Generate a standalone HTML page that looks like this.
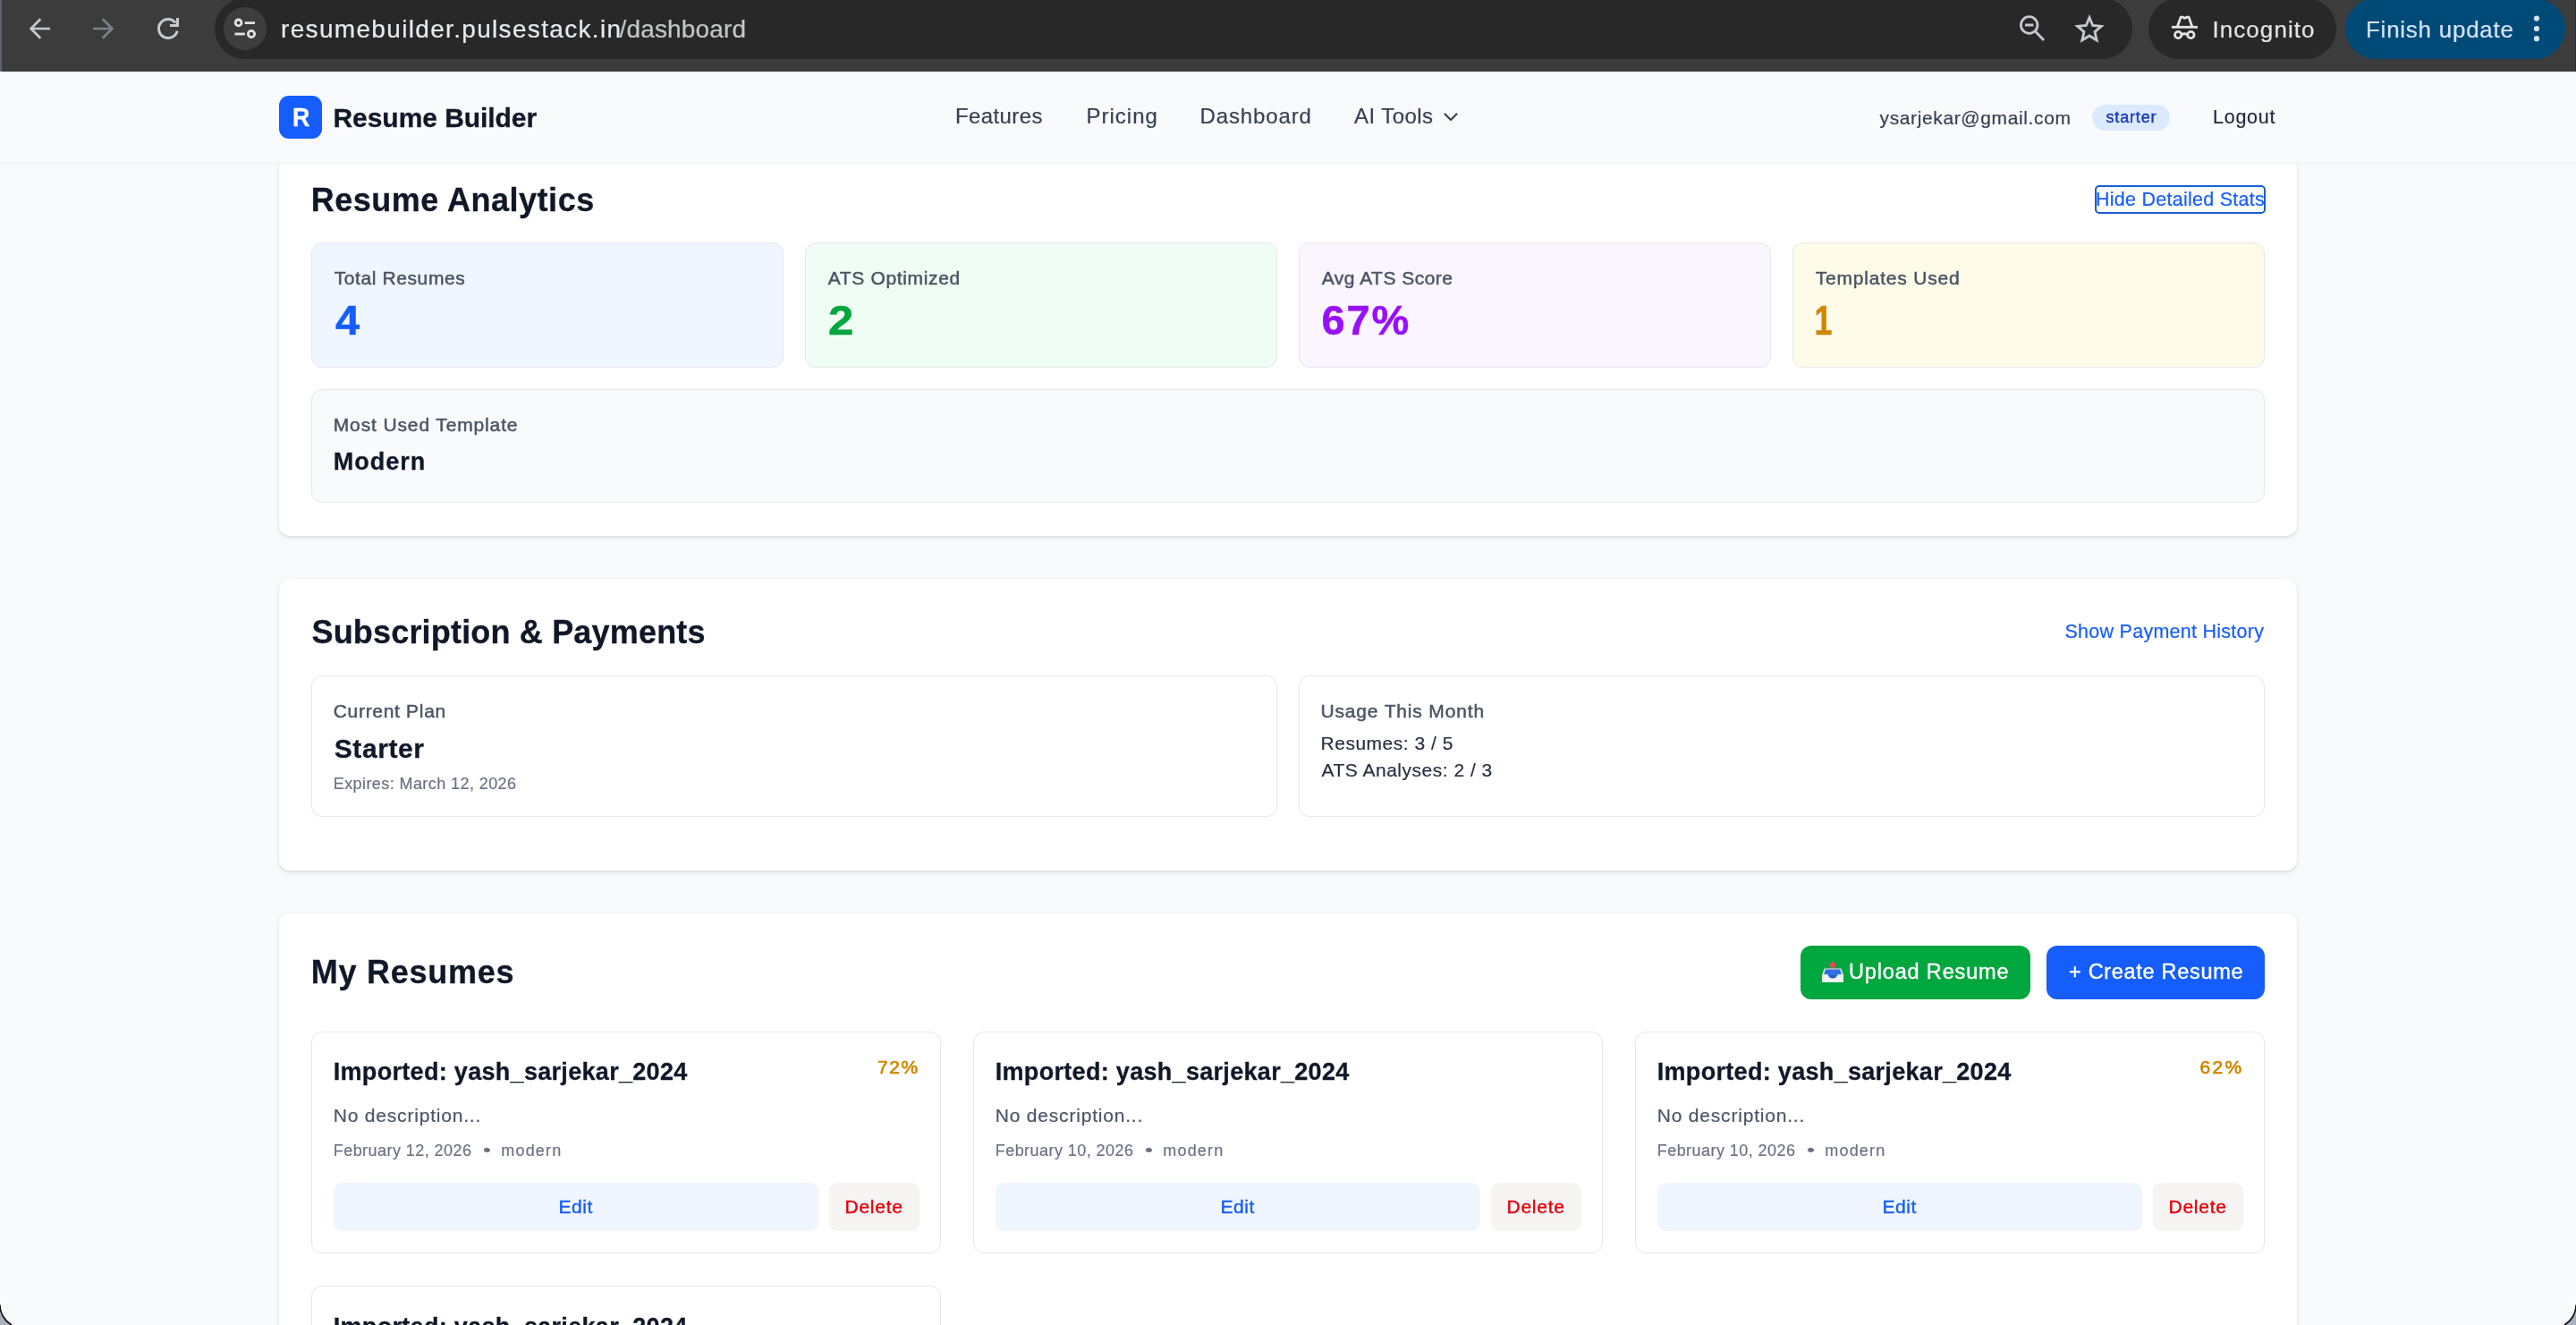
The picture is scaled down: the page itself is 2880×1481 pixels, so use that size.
<!DOCTYPE html>
<html lang="en">
<head>
<meta charset="utf-8">
<title>Dashboard - Resume Builder</title>
<style>
*{box-sizing:border-box;margin:0;padding:0}
html,body{width:2880px;height:1481px;overflow:hidden;background:#f9fafb}
body{position:relative;font-family:"Liberation Sans",sans-serif;-webkit-font-smoothing:antialiased}
.abs{position:absolute}
#text{position:absolute;left:0;top:0;width:2880px;height:1481px;z-index:50;will-change:transform;pointer-events:none}
.t{position:absolute;white-space:nowrap;line-height:1;display:block}
/* ---------- browser chrome ---------- */
#chrome{position:absolute;left:0;top:0;width:2880px;height:79.5px;background:#3c3c3c;z-index:40;overflow:hidden}
#chrome .edge{position:absolute;left:0;top:0;width:2px;height:80px;background:#5c6270}
#chrome .redge{position:absolute;right:0;top:0;width:1.5px;height:80px;background:#2a2a2a}
#chrome .pill{position:absolute;top:-2px;height:67.6px;border-radius:34px;background:#282828}
#chrome .site{position:absolute;left:250px;top:8px;width:48px;height:48px;border-radius:50%;background:#3d3d3d}
#chrome svg{position:absolute;overflow:visible}
/* ---------- page ---------- */
#nav{position:absolute;left:0;top:79.5px;width:2880px;height:103px;background:#f9fafb;border-bottom:1.5px solid #eceef1;z-index:30}
.logo{position:absolute;left:312px;top:107px;width:48px;height:48px;border-radius:11px;background:#155dfc;z-index:31}
.badge{position:absolute;left:2339px;top:117px;width:86.5px;height:28.5px;border-radius:15px;background:#dbeafe;z-index:31}
.panel{position:absolute;left:312px;width:2256px;background:#fff;border-radius:12px;box-shadow:0 1.5px 4.5px rgba(0,0,0,.1),0 1.5px 3px -1.5px rgba(0,0,0,.1)}
.stat{position:absolute;top:271px;width:528px;height:139.5px;border-radius:12px;border:1.5px solid #e5e7eb}
.box{position:absolute;border-radius:12px;border:1.5px solid #e5e7eb;background:#fff}
.btn{position:absolute;border-radius:12px}
.edit{position:absolute;top:1322px;width:542px;height:54px;border-radius:9px;background:#eff6ff}
.del{position:absolute;top:1322px;width:100.5px;height:54px;border-radius:9px;background:#f6f5f4}
.focus{position:absolute;left:2342px;top:207px;width:191px;height:32px;border:2.5px solid #1a5fd6;border-radius:5px}
.corner{position:absolute;bottom:0;z-index:60}

</style>
</head>
<body>
<!-- ===== Browser toolbar ===== -->
<div id="chrome">
  <div class="edge"></div><div class="redge"></div>
  <!-- back -->
  <svg style="left:30px;top:18px" width="28" height="28" viewBox="0 0 28 28" fill="none" stroke="#c7c9cc" stroke-width="2.7" stroke-linejoin="miter"><path d="M26 14H5M15.3 3.3L4.6 14l10.7 10.7"/></svg>
  <!-- forward -->
  <svg style="left:102px;top:18px" width="28" height="28" viewBox="0 0 28 28" fill="none" stroke="#7b808b" stroke-width="2.7"><path d="M2 14h21M12.7 3.3L23.4 14 12.7 24.7"/></svg>
  <!-- reload -->
  <svg style="left:174px;top:18px" width="28" height="28" viewBox="0 0 28 28" fill="none" stroke="#c7c9cc" stroke-width="3"><path d="M24.15 16.7A10.5 10.5 0 1 1 22.3 7.6"/><path d="M24.5 2v8.5H16" stroke-linejoin="miter"/></svg>
  <!-- omnibox -->
  <div class="pill" style="left:240px;width:2144px"></div>
  <div class="site"></div>
  <svg style="left:260px;top:18px" width="28" height="28" viewBox="0 0 28 28" fill="none" stroke="#e3e3e3" stroke-width="2.8"><circle cx="6.6" cy="7.4" r="3.4"/><path d="M13.7 7.6H25"/><path d="M2.5 20h11.3"/><circle cx="21" cy="20" r="3.6"/></svg>
  <!-- zoom-out magnifier -->
  <svg style="left:2256px;top:16px" width="32" height="32" viewBox="0 0 32 32" fill="none" stroke="#c7c9cc" stroke-width="2.8"><circle cx="12.7" cy="12" r="9.3"/><path d="M19.5 19L29 29"/><path d="M8 12h9.4" stroke-width="3"/></svg>
  <!-- star -->
  <svg style="left:2320px;top:16px" width="32" height="32" viewBox="0 0 32 32" fill="none" stroke="#c7c9cc" stroke-width="2.8" stroke-linejoin="miter"><path d="M16 3.6l3.7 8.9 9.6.8-7.3 6.3 2.2 9.4L16 24l-8.2 5 2.2-9.4-7.3-6.3 9.6-.8z"/></svg>
  <!-- incognito chip -->
  <div class="pill" style="left:2402px;width:210px"></div>
  <svg style="left:2428px;top:16px" width="30" height="30" viewBox="0 0 30 30" fill="none" stroke="#e3e3e3" stroke-width="2.8"><path d="M0 14.3h29"/><path d="M6.3 14L10 3.4c.9-.7 1.9-.6 2.8.1 1.2.8 2.4.8 3.6 0 .9-.7 1.9-.8 2.8-.1L22.9 14" stroke-linejoin="round"/><circle cx="7.2" cy="23" r="3.7"/><circle cx="21.4" cy="23" r="3.7"/><path d="M10.8 22.6c2.4-1.1 4.6-1.1 7 0" stroke-width="3"/></svg>
  <!-- update chip -->
  <div class="pill" style="left:2622px;width:246px;background:#004a77"></div>
  <svg style="left:2832px;top:16px" width="8" height="32" viewBox="0 0 8 32" fill="#d3e3fd"><circle cx="4" cy="4.6" r="3.1"/><circle cx="4" cy="16" r="3.1"/><circle cx="4" cy="27.2" r="3.1"/></svg>
</div>

<!-- ===== Site header ===== -->
<div id="nav"></div>
<div class="logo"></div>
<div class="badge"></div>
<svg class="abs" style="left:1613px;top:124px;z-index:31" width="18" height="14" viewBox="0 0 18 14" fill="none" stroke="#364153" stroke-width="2.2" stroke-linecap="round" stroke-linejoin="round"><path d="M2.5 3.5L9 10l6.5-6.5"/></svg>

<!-- ===== Resume Analytics ===== -->
<div class="panel" style="top:120px;height:479px"></div>
<div class="focus"></div>
<div class="stat" style="left:348px;background:#eff6ff"></div>
<div class="stat" style="left:900px;background:#f0fdf4"></div>
<div class="stat" style="left:1452px;background:#faf5ff"></div>
<div class="stat" style="left:2004px;background:#fefce8"></div>
<div class="box" style="left:348px;top:434.75px;width:2184px;height:127.5px;background:#f9fafb"></div>

<!-- ===== Subscription & Payments ===== -->
<div class="panel" style="top:646.5px;height:326.5px"></div>
<div class="box" style="left:348px;top:755px;width:1080px;height:157.5px"></div>
<div class="box" style="left:1452px;top:755px;width:1080px;height:157.5px"></div>

<!-- ===== My Resumes ===== -->
<div class="panel" style="top:1020.5px;height:700px"></div>
<div class="btn" style="left:2013px;top:1057px;width:257px;height:60px;background:#00a63e"></div>
<div class="btn" style="left:2288px;top:1057px;width:244px;height:60px;background:#155dfc"></div>
<!-- outbox tray emoji stand-in -->
<svg class="abs" style="left:2036px;top:1073px" width="26" height="26" viewBox="0 0 26 26"><path d="M13 1.2l4.9 5.4h-2.6V10h-4.6V6.600H8.100z" fill="#f0455a"/><path d="M3.600 9.400h18.800l2.500 7v8.400H1.200v-8.400z" fill="#e3e6ec"/><path d="M4.800 10.400h16.400l1.700 6.200H3.100z" fill="#2f6fe0"/><path d="M1.200 16.200h6.300c.9 2.800 2.900 4.300 5.500 4.300s4.600-1.500 5.500-4.300h6.400v8.600H1.200z" fill="#f1f2f5"/><path d="M7.500 16.200c.9 2.800 2.900 4.300 5.500 4.300s4.600-1.500 5.500-4.300z" fill="#1f5fd0"/></svg>

<div class="box" style="left:348px;top:1153px;width:704px;height:247.5px"></div>
<div class="box" style="left:1088px;top:1153px;width:704px;height:247.5px"></div>
<div class="box" style="left:1828px;top:1153px;width:704px;height:247.5px"></div>
<div class="box" style="left:348px;top:1437px;width:704px;height:247.5px"></div>
<div class="edit" style="left:373px"></div><div class="del" style="left:927px"></div>
<div class="edit" style="left:1113px"></div><div class="del" style="left:1667px"></div>
<div class="edit" style="left:1853px"></div><div class="del" style="left:2407px"></div>

<!-- rounded window corners -->
<svg class="corner" style="left:0" width="16" height="26" viewBox="0 0 16 26"><path d="M0 3.5A26 26 0 0 0 12.97 26H0z" fill="#a9b0b8"/><path d="M0 3.5A26 26 0 0 0 12.97 26" fill="none" stroke="#0b0d12" stroke-width="1.6"/></svg>
<svg class="corner" style="right:0" width="16" height="26" viewBox="0 0 16 26"><path d="M16 3.5A26 26 0 0 1 3.03 26H16z" fill="#a9b0b8"/><path d="M16 3.5A26 26 0 0 1 3.03 26" fill="none" stroke="#0b0d12" stroke-width="1.6"/></svg>

<div id="text">
<span class="t" style="left:314.00px;top:18.80px;font-size:28px;font-weight:400;color:#e8eaed;letter-spacing:1.329px;-webkit-text-stroke:0.2px #e8eaed;">resumebuilder.pulsestack.in</span>
<span class="t" style="left:692.50px;top:18.80px;font-size:28px;font-weight:400;color:#c4c7c5;letter-spacing:0.163px;-webkit-text-stroke:0.2px #c4c7c5;">/dashboard</span>
<span class="t" style="left:2473.50px;top:19.99px;font-size:26px;font-weight:400;color:#e3e3e3;letter-spacing:1.055px;-webkit-text-stroke:0.2px #e3e3e3;">Incognito</span>
<span class="t" style="left:2645.00px;top:19.99px;font-size:26px;font-weight:400;color:#d3e3fd;letter-spacing:0.738px;-webkit-text-stroke:0.2px #d3e3fd;">Finish update</span>
<span class="t" style="left:326.50px;top:116.95px;font-size:29px;font-weight:700;color:#ffffff;letter-spacing:0.000px;transform:scaleX(0.9250);transform-origin:-1.00px 0;-webkit-text-stroke:0.3px #ffffff;">R</span>
<span class="t" style="left:372.50px;top:116.61px;font-size:30px;font-weight:700;color:#101828;letter-spacing:-0.056px;-webkit-text-stroke:0.3px #101828;">Resume Builder</span>
<span class="t" style="left:1068.00px;top:118.43px;font-size:24px;font-weight:400;color:#364153;letter-spacing:0.398px;-webkit-text-stroke:0.2px #364153;">Features</span>
<span class="t" style="left:1214.50px;top:118.43px;font-size:24px;font-weight:400;color:#364153;letter-spacing:0.998px;-webkit-text-stroke:0.2px #364153;">Pricing</span>
<span class="t" style="left:1341.50px;top:118.43px;font-size:24px;font-weight:400;color:#364153;letter-spacing:0.867px;-webkit-text-stroke:0.2px #364153;">Dashboard</span>
<span class="t" style="left:1514.00px;top:118.43px;font-size:24px;font-weight:400;color:#364153;letter-spacing:0.447px;-webkit-text-stroke:0.2px #364153;">AI Tools</span>
<span class="t" style="left:2101.50px;top:120.97px;font-size:21px;font-weight:400;color:#364153;letter-spacing:0.628px;-webkit-text-stroke:0.2px #364153;">ysarjekar@gmail.com</span>
<span class="t" style="left:2354.50px;top:121.96px;font-size:18px;font-weight:400;color:#193cb8;letter-spacing:0.830px;-webkit-text-stroke:0.45px #193cb8">starter</span>
<span class="t" style="left:2474.00px;top:120.55px;font-size:21.5px;font-weight:400;color:#1e2939;letter-spacing:0.743px;-webkit-text-stroke:0.2px #1e2939;">Logout</span>
<span class="t" style="left:347.75px;top:205.53px;font-size:36px;font-weight:700;color:#101828;letter-spacing:0.509px;-webkit-text-stroke:0.3px #101828;">Resume Analytics</span>
<span class="t" style="left:2343.00px;top:212.50px;font-size:21.5px;font-weight:400;color:#155dfc;letter-spacing:0.262px;-webkit-text-stroke:0.2px #155dfc;">Hide Detailed Stats</span>
<span class="t" style="left:373.75px;top:299.72px;font-size:21px;font-weight:400;color:#4a5565;letter-spacing:0.593px;-webkit-text-stroke:0.5px #4a5565">Total Resumes</span>
<span class="t" style="left:374.50px;top:334.11px;font-size:47px;font-weight:700;color:#155dfc;letter-spacing:0.000px;transform:scaleX(1.0385);transform-origin:0.00px 0;-webkit-text-stroke:0.5px #155dfc">4</span>
<span class="t" style="left:925.75px;top:299.72px;font-size:21px;font-weight:400;color:#4a5565;letter-spacing:0.648px;-webkit-text-stroke:0.5px #4a5565">ATS Optimized</span>
<span class="t" style="left:925.50px;top:334.11px;font-size:47px;font-weight:700;color:#00a63e;letter-spacing:0.000px;transform:scaleX(1.0833);transform-origin:-1.00px 0;-webkit-text-stroke:0.5px #00a63e">2</span>
<span class="t" style="left:1477.75px;top:299.72px;font-size:21px;font-weight:400;color:#4a5565;letter-spacing:0.484px;-webkit-text-stroke:0.5px #4a5565">Avg ATS Score</span>
<span class="t" style="left:1477.50px;top:334.11px;font-size:47px;font-weight:700;color:#9810fa;letter-spacing:1.861px;-webkit-text-stroke:0.5px #9810fa">67%</span>
<span class="t" style="left:2029.75px;top:299.72px;font-size:21px;font-weight:400;color:#4a5565;letter-spacing:0.797px;-webkit-text-stroke:0.5px #4a5565">Templates Used</span>
<span class="t" style="left:2028.50px;top:334.11px;font-size:47px;font-weight:700;color:#d08700;letter-spacing:0.000px;transform:scaleX(0.7609);transform-origin:-2.00px 0;-webkit-text-stroke:0.5px #d08700">1</span>
<span class="t" style="left:372.75px;top:464.22px;font-size:21px;font-weight:400;color:#4a5565;letter-spacing:0.869px;-webkit-text-stroke:0.5px #4a5565">Most Used Template</span>
<span class="t" style="left:372.75px;top:502.64px;font-size:27px;font-weight:700;color:#101828;letter-spacing:1.000px;-webkit-text-stroke:0.3px #101828;">Modern</span>
<span class="t" style="left:348.50px;top:689.03px;font-size:36px;font-weight:700;color:#101828;letter-spacing:0.178px;-webkit-text-stroke:0.3px #101828;">Subscription &amp; Payments</span>
<span class="t" style="left:2308.50px;top:696.05px;font-size:21.5px;font-weight:400;color:#155dfc;letter-spacing:0.265px;-webkit-text-stroke:0.2px #155dfc;">Show Payment History</span>
<span class="t" style="left:372.75px;top:784.22px;font-size:21px;font-weight:400;color:#4a5565;letter-spacing:0.685px;-webkit-text-stroke:0.5px #4a5565">Current Plan</span>
<span class="t" style="left:373.75px;top:822.11px;font-size:30px;font-weight:700;color:#101828;letter-spacing:0.578px;-webkit-text-stroke:0.3px #101828;">Starter</span>
<span class="t" style="left:372.75px;top:866.76px;font-size:18px;font-weight:400;color:#6a7282;letter-spacing:0.416px;-webkit-text-stroke:0.2px #6a7282;">Expires: March 12, 2026</span>
<span class="t" style="left:1476.50px;top:784.22px;font-size:21px;font-weight:400;color:#4a5565;letter-spacing:0.835px;-webkit-text-stroke:0.5px #4a5565">Usage This Month</span>
<span class="t" style="left:1476.50px;top:820.22px;font-size:21px;font-weight:400;color:#27313f;letter-spacing:0.516px;-webkit-text-stroke:0.2px #27313f;">Resumes: 3 / 5</span>
<span class="t" style="left:1477.50px;top:850.22px;font-size:21px;font-weight:400;color:#27313f;letter-spacing:0.504px;-webkit-text-stroke:0.2px #27313f;">ATS Analyses: 2 / 3</span>
<span class="t" style="left:347.75px;top:1069.03px;font-size:36px;font-weight:700;color:#101828;letter-spacing:0.742px;-webkit-text-stroke:0.3px #101828;">My Resumes</span>
<span class="t" style="left:2067.00px;top:1075.11px;font-size:23.5px;font-weight:400;color:#ffffff;letter-spacing:0.839px;-webkit-text-stroke:0.4px #fff">Upload Resume</span>
<span class="t" style="left:2313.00px;top:1075.11px;font-size:23.5px;font-weight:400;color:#ffffff;letter-spacing:0.696px;-webkit-text-stroke:0.4px #fff">+ Create Resume</span>
<span class="t" style="left:372.75px;top:1185.14px;font-size:27px;font-weight:700;color:#101828;letter-spacing:0.307px;-webkit-text-stroke:0.3px #101828;">Imported: yash_sarjekar_2024</span>
<span class="t" style="left:372.75px;top:1235.97px;font-size:21px;font-weight:400;color:#4a5565;letter-spacing:0.803px;-webkit-text-stroke:0.2px #4a5565;">No description...</span>
<span class="t" style="left:372.75px;top:1276.76px;font-size:18px;font-weight:400;color:#6a7282;letter-spacing:0.448px;-webkit-text-stroke:0.2px #6a7282;">February 12, 2026</span>
<span class="t" style="left:539.50px;top:1276.76px;font-size:18px;font-weight:400;color:#6a7282;letter-spacing:0.000px;transform:scaleX(1.4167);transform-origin:0.00px 0;-webkit-text-stroke:0.2px #6a7282;">•</span>
<span class="t" style="left:560.25px;top:1276.76px;font-size:18px;font-weight:400;color:#6a7282;letter-spacing:1.196px;-webkit-text-stroke:0.2px #6a7282;">modern</span>
<span class="t" style="left:981.00px;top:1182.22px;font-size:21px;font-weight:400;color:#d08700;letter-spacing:1.571px;-webkit-text-stroke:0.7px #d08700">72%</span>
<span class="t" style="left:624.50px;top:1338.47px;font-size:21px;font-weight:400;color:#155dfc;letter-spacing:0.549px;-webkit-text-stroke:0.4px #155dfc">Edit</span>
<span class="t" style="left:944.50px;top:1338.47px;font-size:21px;font-weight:400;color:#e7000b;letter-spacing:0.745px;-webkit-text-stroke:0.4px #e7000b">Delete</span>
<span class="t" style="left:1112.75px;top:1185.14px;font-size:27px;font-weight:700;color:#101828;letter-spacing:0.307px;-webkit-text-stroke:0.3px #101828;">Imported: yash_sarjekar_2024</span>
<span class="t" style="left:1112.75px;top:1235.97px;font-size:21px;font-weight:400;color:#4a5565;letter-spacing:0.803px;-webkit-text-stroke:0.2px #4a5565;">No description...</span>
<span class="t" style="left:1112.75px;top:1276.76px;font-size:18px;font-weight:400;color:#6a7282;letter-spacing:0.448px;-webkit-text-stroke:0.2px #6a7282;">February 10, 2026</span>
<span class="t" style="left:1279.50px;top:1276.76px;font-size:18px;font-weight:400;color:#6a7282;letter-spacing:0.000px;transform:scaleX(1.4167);transform-origin:0.00px 0;-webkit-text-stroke:0.2px #6a7282;">•</span>
<span class="t" style="left:1300.25px;top:1276.76px;font-size:18px;font-weight:400;color:#6a7282;letter-spacing:1.196px;-webkit-text-stroke:0.2px #6a7282;">modern</span>
<span class="t" style="left:1364.50px;top:1338.47px;font-size:21px;font-weight:400;color:#155dfc;letter-spacing:0.549px;-webkit-text-stroke:0.4px #155dfc">Edit</span>
<span class="t" style="left:1684.50px;top:1338.47px;font-size:21px;font-weight:400;color:#e7000b;letter-spacing:0.745px;-webkit-text-stroke:0.4px #e7000b">Delete</span>
<span class="t" style="left:1852.75px;top:1185.14px;font-size:27px;font-weight:700;color:#101828;letter-spacing:0.307px;-webkit-text-stroke:0.3px #101828;">Imported: yash_sarjekar_2024</span>
<span class="t" style="left:1852.75px;top:1235.97px;font-size:21px;font-weight:400;color:#4a5565;letter-spacing:0.803px;-webkit-text-stroke:0.2px #4a5565;">No description...</span>
<span class="t" style="left:1852.75px;top:1276.76px;font-size:18px;font-weight:400;color:#6a7282;letter-spacing:0.448px;-webkit-text-stroke:0.2px #6a7282;">February 10, 2026</span>
<span class="t" style="left:2019.50px;top:1276.76px;font-size:18px;font-weight:400;color:#6a7282;letter-spacing:0.000px;transform:scaleX(1.4167);transform-origin:0.00px 0;-webkit-text-stroke:0.2px #6a7282;">•</span>
<span class="t" style="left:2040.25px;top:1276.76px;font-size:18px;font-weight:400;color:#6a7282;letter-spacing:1.196px;-webkit-text-stroke:0.2px #6a7282;">modern</span>
<span class="t" style="left:2459.50px;top:1182.22px;font-size:21px;font-weight:400;color:#d08700;letter-spacing:2.321px;-webkit-text-stroke:0.7px #d08700">62%</span>
<span class="t" style="left:2104.50px;top:1338.47px;font-size:21px;font-weight:400;color:#155dfc;letter-spacing:0.549px;-webkit-text-stroke:0.4px #155dfc">Edit</span>
<span class="t" style="left:2424.50px;top:1338.47px;font-size:21px;font-weight:400;color:#e7000b;letter-spacing:0.745px;-webkit-text-stroke:0.4px #e7000b">Delete</span>
<span class="t" style="left:372.75px;top:1469.74px;font-size:27px;font-weight:700;color:#101828;letter-spacing:0.307px;-webkit-text-stroke:0.3px #101828;">Imported: yash_sarjekar_2024</span>
</div>
</body>
</html>
